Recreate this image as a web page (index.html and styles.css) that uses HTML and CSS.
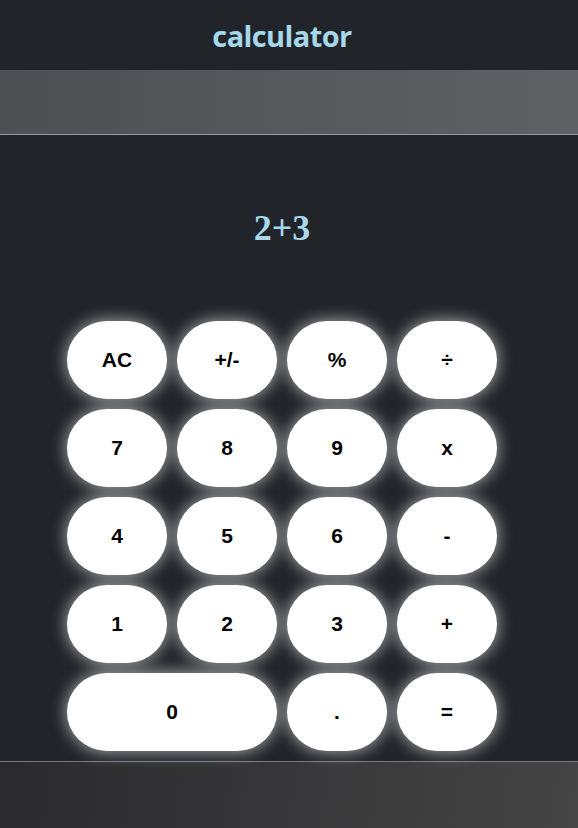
FILE: index.html
```html
<!DOCTYPE html>
<html>
<head>
<meta charset="utf-8">
<link rel="stylesheet" href="styles.css">
</head>
<body>
<header class="top"><h1 class="title">calculator</h1></header>
<div class="bar"></div>
<main class="calc">
  <div class="display">2+3</div>
  <div class="keys">
    <button class="key">AC</button>
    <button class="key">+/-</button>
    <button class="key">%</button>
    <button class="key">÷</button>
    <button class="key">7</button>
    <button class="key">8</button>
    <button class="key">9</button>
    <button class="key">x</button>
    <button class="key">4</button>
    <button class="key">5</button>
    <button class="key">6</button>
    <button class="key">-</button>
    <button class="key">1</button>
    <button class="key">2</button>
    <button class="key">3</button>
    <button class="key">+</button>
    <button class="key wide">0</button>
    <button class="key">.</button>
    <button class="key">=</button>
  </div>
</main>
<footer class="foot"></footer>
</body>
</html>
```
FILE: styles.css
```css
html, body { margin: 0; padding: 0; }
body { background: #212429; width: 578px; height: 828px; overflow: hidden; }
.top { height: 70px; display: flex; align-items: center; justify-content: center; padding-right: 14px; background: #212429; }
.title { margin: 0; font-family: "Open Sans", sans-serif; font-weight: 700; font-size: 29px; color: #a6d7ea; letter-spacing: -0.6px; }
.bar { height: 64px; background: linear-gradient(90deg, #4e4f53, #606165); border-bottom: 1px solid #9a9a9c; }
.calc { height: 626px; display: flex; flex-direction: column; align-items: center; padding-right: 14px; box-sizing: border-box; }
.display { height: 186px; display: flex; align-items: center; justify-content: center; font-family: "Liberation Serif", serif; font-weight: 700; font-size: 36px; color: #a6d7ea; }
.keys { display: grid; grid-template-columns: repeat(4, 100px); grid-auto-rows: 78px; gap: 10px; }
.key { border: none; background: #fff; border-radius: 40px / 39px; font-family: "Liberation Sans", Arial, sans-serif; font-weight: 700; font-size: 21px; color: #000; box-shadow: 0 0 16px 1px rgba(255,255,255,0.6); padding: 0; }
.wide { grid-column: span 2; }
.foot { height: 67px; border-top: 1px solid #7a7a7c; background: linear-gradient(100deg, #2a2a2c, #454546); }
```
